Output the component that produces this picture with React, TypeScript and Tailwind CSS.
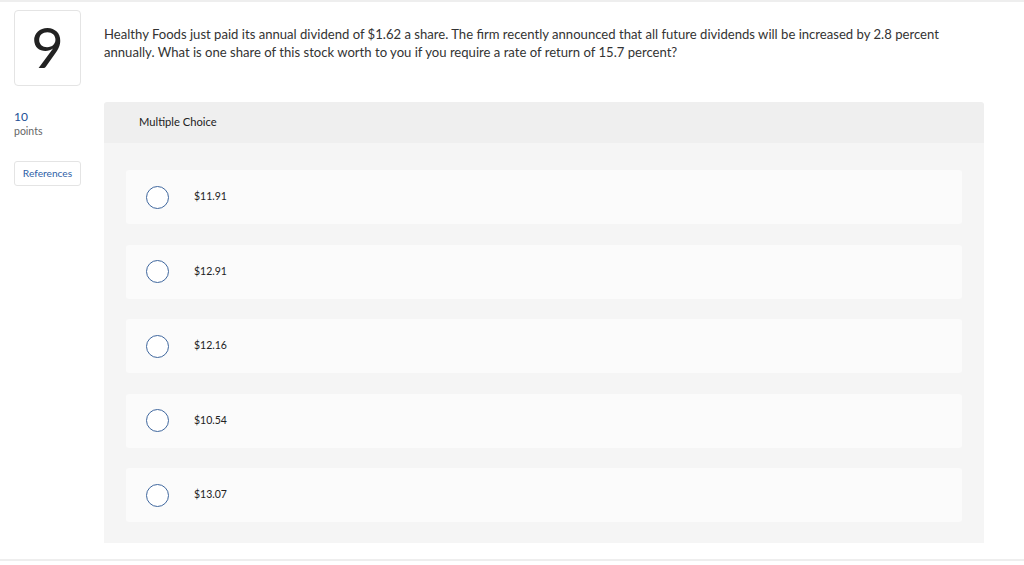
import React from "react";

const options = ["$11.91", "$12.91", "$12.16", "$10.54", "$13.07"];

export default function App() {
  return (
    <div
      className="w-[1024px] h-[565px] bg-white overflow-hidden text-[#222]"
      style={{ fontFamily: "Lato, 'Open Sans', Arial, sans-serif" }}
    >
      <div className="h-[2px] bg-[#eeeeee]" />
      <div className="flex pl-[14px] pt-[8px]">
        <div className="w-[67px] flex flex-col">
          <div className="h-[76px] border border-[#e4e4e4] rounded-[4px] flex items-center justify-center">
            <span className="text-[56px] leading-none text-[#222] -mt-[2px]">9</span>
          </div>
          <div className="mt-[23px] text-[12px] leading-[15px] text-[#1c4f96]">10</div>
          <div className="text-[10.5px] leading-[14px] text-[#666]">points</div>
          <div className="mt-[23px] h-[25px] border border-[#e4e4e4] rounded-[3px] flex items-center justify-center text-[10.2px] text-[#2f5fa8]">
            References
          </div>
        </div>
        <div className="ml-[23px] w-[880px] flex flex-col">
          <p className="mt-[15px] text-[13.1px] leading-[18px] text-[#333] pr-[30px]">
            Healthy Foods just paid its annual dividend of $1.62 a share. The firm recently announced that all future dividends will be increased by 2.8 percent annually. What is one share of this stock worth to you if you require a rate of return of 15.7 percent?
          </p>
          <div className="mt-[41px] rounded-t-[3px] overflow-hidden">
            <div className="h-[41px] bg-[#efefef] flex items-center pl-[35px] text-[11.2px] text-[#222]">
              Multiple Choice
            </div>
            <div className="bg-[#f5f5f5] px-[22px] pt-[27px] pb-[21px] flex flex-col gap-[20.5px]">
              {options.map((o) => (
                <div key={o} className="h-[54px] bg-[#fbfbfb] rounded-[3px] flex items-center pl-[20px]">
                  <div className="w-[23px] h-[23px] rounded-full border border-[#3f679e] bg-white" />
                  <span className="ml-[25px] text-[10.5px] text-[#222]">{o}</span>
                </div>
              ))}
            </div>
          </div>
        </div>
      </div>
      <div className="mt-[16px] h-[2px] bg-[#eeeeee]" />
    </div>
  );
}
